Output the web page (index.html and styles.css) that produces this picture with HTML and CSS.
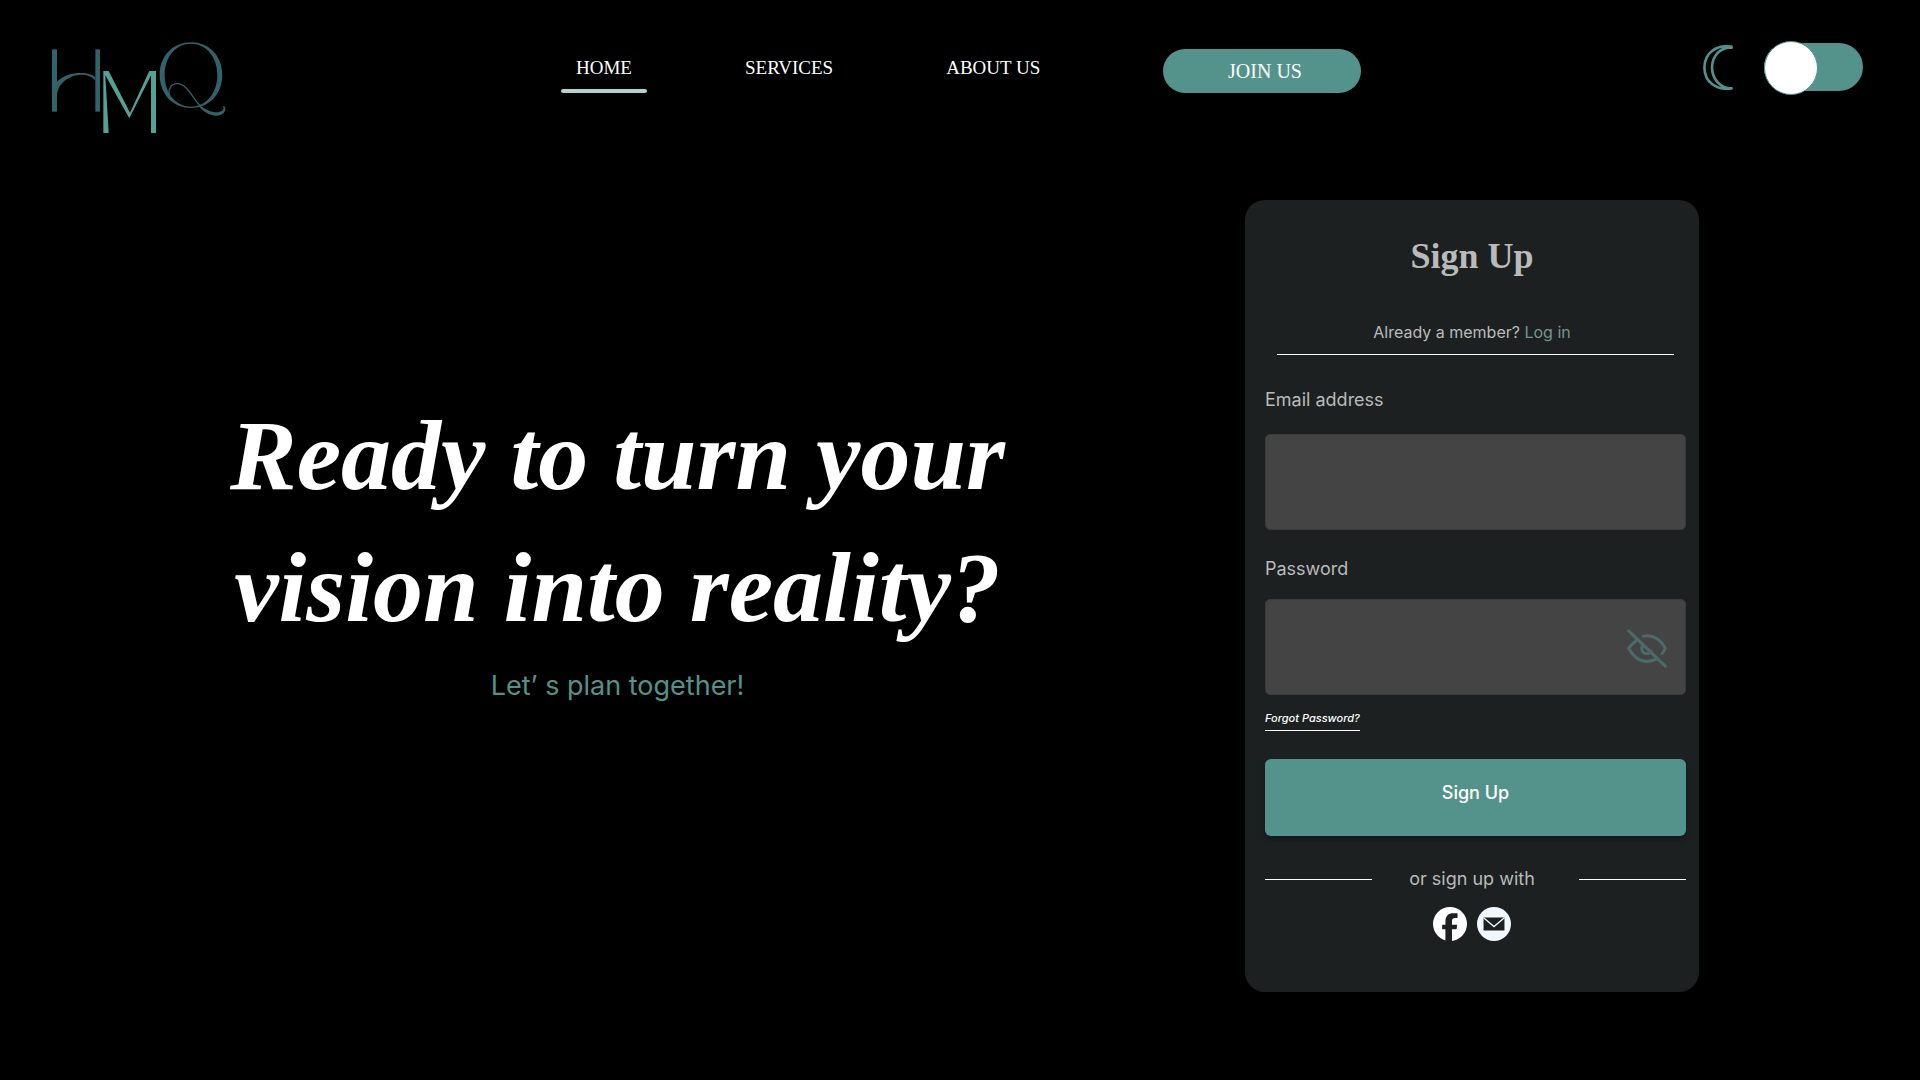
FILE: index.html
```html
<!DOCTYPE html>
<html lang="en">
<head>
<meta charset="utf-8">
<meta name="viewport" content="width=device-width, initial-scale=1">
<title>HMQ</title>
<link rel="stylesheet" href="styles.css">
</head>
<body>
<header class="header">
  <a class="logo" href="#" aria-label="HMQ">
    <svg viewBox="66 36 522 276" width="174" height="92" aria-hidden="true">
      <g fill="#32626a">
        <rect x="66" y="58" width="15" height="187"/>
        <rect x="196" y="58" width="14" height="187"/>
        <path d="M81 155C100 136 125 129 152 129C172 129 190 134 196 142V152C188 139 172 134 152 134C116 136 84 160 81 195Z"/>
        <path fill-rule="evenodd" d="M483 37C537 37 577 78 577 135S537 234 483 234S389 192 389 135S429 37 483 37ZM483 41C438 41 404 80 404 135S438 230 483 230S562 190 562 135S528 41 483 41Z"/>
        <path d="M508 224C530 243 560 253 575 243C583 237 581 231 578 228C588 226 589 240 581 249C562 266 528 254 508 230Z"/>
      </g>
      <path d="M418 198C414 175 425 161 441 161C470 161 485 200 512 229" fill="none" stroke="#32626a" stroke-width="4"/>
      <path d="M220 123H236L300 248L358 123H378V309H363V136L298 265L226 136L236 309H220Z" fill="#57a096"/>
    </svg>
  </a>
  <nav class="nav">
    <a class="nav-link active" href="#">HOME</a>
    <a class="nav-link" href="#">SERVICES</a>
    <a class="nav-link" href="#">ABOUT US</a>
    <button class="join" type="button">JOIN US</button>
  </nav>
  <div class="theme">
    <svg viewBox="0 0 90 136" width="30" height="45" fill="none" stroke="#54938b" stroke-width="8" stroke-linejoin="round" aria-hidden="true">
      <path d="M86 5C40-2 4 24 4 68S40 138 86 131C53 132 27 103 27 68S53 5 86 8Z"/>
    </svg>
    <input class="switch" type="checkbox" role="switch" aria-label="Light theme">
  </div>
</header>
<main class="main">
  <section class="hero">
    <h1 class="hero-title">Ready to turn your<br>vision into reality?</h1>
    <p class="hero-sub">Let’ s plan together!</p>
  </section>
  <section class="card">
    <h2 class="card-title">Sign Up</h2>
    <p class="member">Already a member? <a class="login" href="#">Log in</a></p>
    <form class="form">
      <hr class="divider">
      <label class="label" for="email">Email address</label>
      <input class="field" id="email" type="email">
      <label class="label label-password" for="password">Password</label>
      <div class="password">
        <input class="field" id="password" type="password">
        <button class="reveal" type="button" aria-label="Show password">
          <svg viewBox="1190 297 121 117" width="40" height="39" fill="none" stroke="#4a6c68" stroke-width="9" stroke-linecap="round" stroke-linejoin="round" aria-hidden="true">
            <path d="M1195 302L1306 409M1222 329C1210 337 1200 348 1195 355C1208 378 1228 395 1250 395C1262 395 1272 391 1281 385M1240 318C1270 311 1294 332 1306 355C1304 361 1300 366 1296 371M1238 346C1230 358 1238 371 1250 371C1256 371 1261 368 1263 364"/>
          </svg>
        </button>
      </div>
      <a class="forgot" href="#">Forgot Password?</a>
      <button class="submit" type="submit">Sign Up</button>
      <div class="or"><span class="or-text">or sign up with</span></div>
    </form>
    <div class="social">
      <a class="social-link" href="#" aria-label="Facebook">
        <svg viewBox="0 0 104 104" width="34" height="34" aria-hidden="true">
          <circle cx="52" cy="52" r="52" fill="#fff"/>
          <path d="M38 104V68H28V54H38V44C38 27 47 19 62 19H75V34H68C61 34 58 37 58 44V54H74L72 68H58V104Z" fill="#1c2020"/>
        </svg>
      </a>
      <a class="social-link" href="#" aria-label="Email">
        <svg viewBox="0 0 104 104" width="34" height="34" aria-hidden="true">
          <circle cx="52" cy="52" r="52" fill="#f0f8fd"/>
          <rect x="20" y="32" width="64" height="40" rx="2" fill="#1c2020"/>
          <path d="M21 34L52 60L83 34" fill="none" stroke="#f0f8fd" stroke-width="4"/>
        </svg>
      </a>
    </div>
  </section>
</main>
</body>
</html>
```

FILE: styles.css
```css
* {
  box-sizing: border-box;
}

body {
  margin: 0;
  min-height: 100vh;
  background: #000;
  color: #fff;
  font-family: Inter, sans-serif;
}

h1, h2, p {
  margin: 0;
}

a {
  color: inherit;
  text-decoration: none;
}

button {
  border: 0;
  padding: 0;
  color: inherit;
  cursor: pointer;
}

svg {
  display: block;
}

.header {
  display: grid;
  grid-template-columns: 509fr 800fr 502fr;
  align-items: start;
  padding: 42px 57px 0 52px;
}

.logo {
  justify-self: start;
}

.nav {
  display: flex;
  align-items: flex-start;
  gap: 83px;
  font-family: "Liberation Serif", serif;
}

.nav-link {
  margin-top: 10px;
  padding: 4px 15px 13px;
  font-size: 19px;
  line-height: 24px;
  white-space: nowrap;
}

.nav-link.active::after {
  content: "";
  display: block;
  height: 4px;
  margin: 9px -15px 0;
  border-radius: 2px;
  background: #afd4cf;
}

.join {
  width: 198px;
  height: 44px;
  margin: 7px 0 0 auto;
  padding-left: 6px;
  border-radius: 22px;
  background: #54938b;
  font-family: inherit;
  font-size: 20px;
}

.theme {
  display: flex;
  align-items: center;
  justify-content: flex-end;
  gap: 31px;
  margin-top: 1px;
}

.switch {
  appearance: none;
  position: relative;
  width: 99px;
  height: 48px;
  margin: 0;
  border-radius: 24px;
  background: #54938b;
}

.switch::before {
  content: "";
  position: absolute;
  top: -2px;
  left: 0;
  width: 52px;
  height: 52px;
  border: 1px solid #54938b;
  border-radius: 50%;
  background: #fff;
}

.main {
  display: grid;
  grid-template-columns: 1fr 454px;
  padding: 66px 221px 88px 0;
}

.hero {
  align-self: center;
  padding: 0 10px 98px 0;
  text-align: center;
}

.hero-title {
  font-family: "Liberation Serif", serif;
  font-size: 100px;
  font-style: italic;
  font-weight: 700;
  line-height: 132px;
}

.hero-sub {
  margin-top: 14px;
  color: #54938b;
  font-size: 27px;
  line-height: 36px;
}

.card {
  padding: 32px 0 51px;
  border-radius: 20px;
  background: #1c2020;
  color: #b9bbba;
}

.card-title {
  font-family: "Liberation Serif", serif;
  font-size: 36px;
  line-height: 48px;
  text-align: center;
}

.member {
  margin-top: 40px;
  font-size: 16px;
  line-height: 24px;
  text-align: center;
}

.login {
  color: #76958f;
}

.form {
  display: flex;
  flex-direction: column;
  padding: 0 13px 0 20px;
}

.divider {
  align-self: stretch;
  height: 1px;
  margin: 10px 12px 0;
  border: 0;
  background: #fff;
}

.label {
  margin: 33px 0 22px;
  font-size: 18px;
  line-height: 24px;
}

.label-password {
  margin: 27px 0 18px;
}

.field {
  display: block;
  width: 100%;
  height: 96px;
  padding: 0 20px;
  border: 1px solid #3a3b3b;
  border-radius: 5px;
  background: #444;
  color: #fff;
  font: inherit;
}

.password {
  position: relative;
}

.reveal {
  position: absolute;
  top: 30px;
  right: 19px;
  background: none;
}

.forgot {
  align-self: flex-start;
  margin-top: 15px;
  padding-bottom: 4px;
  border-bottom: 1px solid #fff;
  color: #fff;
  font-size: 11px;
  font-style: italic;
  font-weight: 500;
  line-height: 16px;
}

.submit {
  height: 77px;
  margin-top: 28px;
  padding-bottom: 10px;
  border-radius: 6px;
  background: #54938b;
  box-shadow: 0 4px 4px rgba(0, 0, 0, 0.25);
  color: #fff;
  font-family: inherit;
  font-size: 18px;
  font-weight: 500;
}

.or {
  display: flex;
  align-items: center;
  justify-content: space-between;
  margin-top: 31px;
  font-size: 18px;
  line-height: 24px;
}

.or::before,
.or::after {
  content: "";
  width: 107px;
  height: 1px;
  background: #fff;
}

.or-text {
  padding-right: 7px;
}

.social {
  display: flex;
  justify-content: center;
  gap: 10px;
  margin-top: 16px;
}
```
